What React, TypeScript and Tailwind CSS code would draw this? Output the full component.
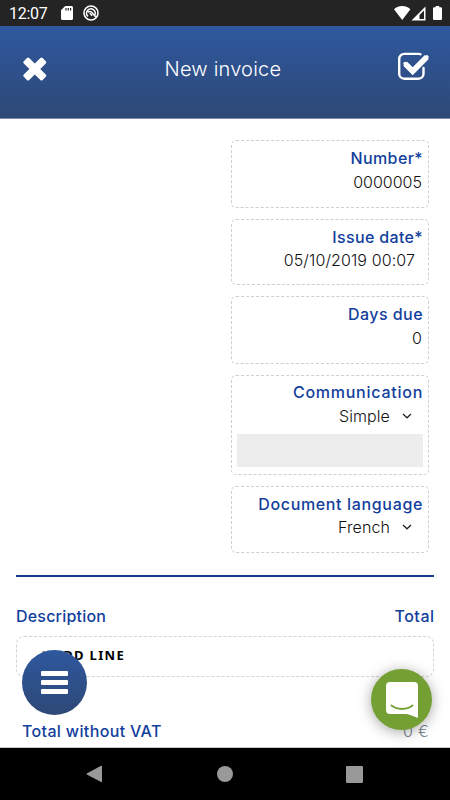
import type { ReactNode } from "react";
import { clsx } from "clsx";

const FONT = "font-['Inter','Liberation_Sans',sans-serif]";

function StatusBar() {
  return (
    <div className="flex h-[26px] shrink-0 items-center bg-[#242424] pl-[9px] pr-2 text-white">
      <span className="w-[38px] whitespace-nowrap pt-[2px] font-['Roboto',sans-serif] text-[16px] leading-6 tracking-[-0.3px]">
        12:07
      </span>
      {/* sd card */}
      <svg className="ml-[14px]" width="12" height="14" viewBox="0 0 12 14">
        <path
          d="M4.2 0H10.5A1.5 1.5 0 0 1 12 1.5V12.5A1.5 1.5 0 0 1 10.5 14H1.5A1.5 1.5 0 0 1 0 12.5V4.2Z"
          fill="currentColor"
        />
        <path d="M5 2V4.600M7.300 2V4.600M9.600 2V4.600" stroke="#242424" strokeWidth="1.2" />
      </svg>
      <svg className="ml-[10px]" width="16" height="16" viewBox="0 0 16 16" fill="none" stroke="currentColor">
        <circle cx="8" cy="8" r="7" strokeWidth="1.6" />
        <path d="M5 11.400A4.300 4.300 0 1 1 11.600 10.400" strokeWidth="1.6" />
        <path d="M4.800 7.200C6.500 6 8 6.300 8.900 7.600L13 12.200M6.800 8.200L9.200 10.800" strokeWidth="1.5" />
      </svg>
      <svg className="ml-auto" width="17" height="14" viewBox="0 0 17 14">
        <path d="M8.200 14L0 3.300C4.800 -1 11.600 -1 16.400 3.300Z" fill="currentColor" />
      </svg>
      <svg width="15" height="15" viewBox="0 0 15 15">
        <path d="M14.500 0.500V14.500H0.500Z" fill="currentColor" />
        <path d="M13 4.500V13H8.500V9Z" fill="#242424" />
      </svg>
      <svg className="ml-[7px]" width="9" height="14" viewBox="0 0 9 14">
        <path d="M2.700 0H6.300V1.300H8.200L9 2.100V13.200L8.200 14H0.800L0 13.200V2.100L0.800 1.300H2.700Z" fill="currentColor" />
      </svg>
    </div>
  );
}

function Header() {
  return (
    <header className="flex h-[93px] shrink-0 items-center justify-between border-b border-[#7d8db1] bg-linear-to-b from-[#2e589e] to-[#2e4877] pl-[23px] pr-[20px] text-white">
      <button aria-label="Close" className="mt-[-7px]">
        <svg width="24" height="24" viewBox="0 0 24 24" fill="currentColor">
          <g transform="rotate(45 11.8 12)">
            <rect x="-1.500" y="8.200" width="26.600" height="7.600" rx="1.600" />
            <rect x="8" y="-1.300" width="7.600" height="26.600" rx="1.600" />
          </g>
        </svg>
      </button>
      <h1 className="mt-[-6px] w-[115px] whitespace-nowrap text-[20px] font-[350] leading-[30px] tracking-[0.2px]">New invoice</h1>
      <button aria-label="Save" className="mt-[-12px]">
        <svg width="33" height="28" viewBox="0 0 33 28" fill="none" stroke="currentColor">
          <path
            d="M23.500 2.200C23 1.900 22.300 1.900 21.500 1.900H7.200A5 5 0 0 0 2.200 6.900V21.700A5 5 0 0 0 7.200 26.700H21.500A5 5 0 0 0 26.500 21.700V16"
            strokeWidth="2.400"
            strokeLinecap="round"
          />
          <path d="M8.200 11.700L15.700 19.200L29.800 5.100" strokeWidth="5.600" />
          <path d="M8.200 11.700L15.700 19.200L29.800 5.100" strokeWidth="3.800" strokeLinecap="round" />
        </svg>
      </button>
    </header>
  );
}

function Field({ label, labelClass, className, children }: {
  label: string;
  labelClass?: string;
  className?: string;
  children: ReactNode;
}) {
  return (
    <div
      className={clsx(
        "flex w-[198px] flex-col items-end rounded-[5px] border border-dashed border-[#cfcfcf] px-[5px] pt-[5px]",
        className,
      )}
    >
      <label className={clsx("whitespace-nowrap text-[16px] font-[550] leading-6 text-[#12409c]", labelClass)}>
        {label}
      </label>
      {children}
    </div>
  );
}

function Select({ value }: { value: string }) {
  return (
    <div className="flex h-[23px] items-center pr-[11px]">
      <span className="whitespace-nowrap text-[16px] font-light leading-[23px] tracking-[0.1px] text-[#111]">{value}</span>
      <svg className="ml-[12px] mt-[-2px]" width="10" height="6" viewBox="0 0 10 6" fill="none" stroke="#222" strokeWidth="1.2">
        <path d="M1 1L5 4.800L9 1" />
      </svg>
    </div>
  );
}

function NavBar() {
  return (
    <nav className="flex h-[52px] shrink-0 items-center justify-between bg-black pl-[86px] pr-[87px] text-[#999]">
      <svg width="16" height="18" viewBox="0 0 17 18" fill="currentColor">
        <path d="M16 0.300Q17 0 17 1V17Q17 18 16 17.600L0.800 9.600Q0 9 0.800 8.400Z" />
      </svg>
      <span className="ml-[2px] size-4 rounded-full bg-[#999]" />
      <span className="size-[17px] rounded-[1px] bg-[#999]" />
    </nav>
  );
}

export default function App() {
  return (
    <div className={clsx("relative flex h-[800px] w-[450px] flex-col overflow-hidden bg-white", FONT)}>
      <StatusBar />
      <Header />

      <main className="flex min-h-0 flex-1 flex-col overflow-hidden border-b border-[#c5cbc5] px-4 pt-[21px]">
        <div className="mr-[5px] flex flex-col items-end gap-[11px]">
          <Field label="Number*" labelClass="tracking-[0.4px]" className="h-[68px]">
            <span className="mr-px text-[16px] font-light leading-6 text-[#111]">0000005</span>
          </Field>
          <Field label="Issue date*" labelClass="tracking-[0.35px]" className="h-[66px]">
            <span className="mr-2 text-[16px] font-light leading-[22px] tracking-[0.1px] text-[#111]">05/10/2019 00:07</span>
          </Field>
          <Field label="Days due" labelClass="tracking-[0.45px]" className="h-[68px]">
            <span className="mr-px text-[16px] font-light leading-6 text-[#111]">0</span>
          </Field>
          <Field label="Communication" labelClass="mt-[-1px] tracking-[0.75px]" className="h-[100px]">
            <div className="mt-px">
              <Select value="Simple" />
            </div>
            <div className="mt-[6px] h-[33px] w-full bg-[#ededed]" />
          </Field>
          <Field label="Document language" labelClass="tracking-[0.65px]" className="h-[67px]">
            <Select value="French" />
          </Field>
        </div>

        <hr className="mt-[22px] h-[2px] shrink-0 border-0 bg-[#1c3b86]" />

        <div className="mt-[27px] flex shrink-0 justify-between text-[16px] font-[550] leading-6 text-[#12409c]">
          <span className="tracking-[0.2px]">Description</span>
          <span className="mr-[-0.5px] tracking-[0.5px]">Total</span>
        </div>
        <button className="mt-[8px] flex h-[41px] shrink-0 items-center rounded-[8px] border border-dashed border-[#d4d4d4] pb-[2px] pl-[21px] font-['Noto_Sans',sans-serif] text-[13px] font-bold tracking-[1.3px] text-black">
          <span className="w-[15px] text-left text-[20px] leading-5 tracking-normal">+</span>
          ADD LINE
        </button>
        <div className="mt-[42px] flex shrink-0 justify-between pl-[6px] pr-[5px] text-[16px] leading-6">
          <span className="font-[550] tracking-[0.35px] text-[#12409c]">Total without VAT</span>
          <span className="font-light tracking-[0.3px] text-[#75838f]">0 €</span>
        </div>
      </main>

      <NavBar />

      {/* floating buttons */}
      <button
        aria-label="Menu"
        className="absolute left-[22px] top-[650px] flex size-[65px] flex-col items-center justify-center gap-[4px] rounded-full bg-linear-to-b from-[#2e589e] to-[#2e4877]"
      >
        <span className="h-[5px] w-[27px] rounded-[1px] bg-white" />
        <span className="h-[5px] w-[27px] rounded-[1px] bg-white" />
        <span className="h-[5px] w-[27px] rounded-[1px] bg-white" />
      </button>
      <button
        aria-label="Chat"
        className="absolute left-[371px] top-[669px] flex size-[61px] items-center justify-center rounded-full bg-[#74a033] shadow-[0_2px_14px_rgba(0,0,0,0.35)]"
      >
        <svg width="32" height="36" viewBox="0 0 32 36">
          <path d="M4 0H28A4 4 0 0 1 32 4V36C27.500 34.600 25 32.500 20.500 32H4A4 4 0 0 1 0 28V4A4 4 0 0 1 4 0Z" fill="#fff" />
          <path d="M5.500 23.500C11.500 28 20.500 28 26.500 23.500" fill="none" stroke="#74a033" strokeWidth="2" strokeLinecap="round" />
        </svg>
      </button>
    </div>
  );
}
